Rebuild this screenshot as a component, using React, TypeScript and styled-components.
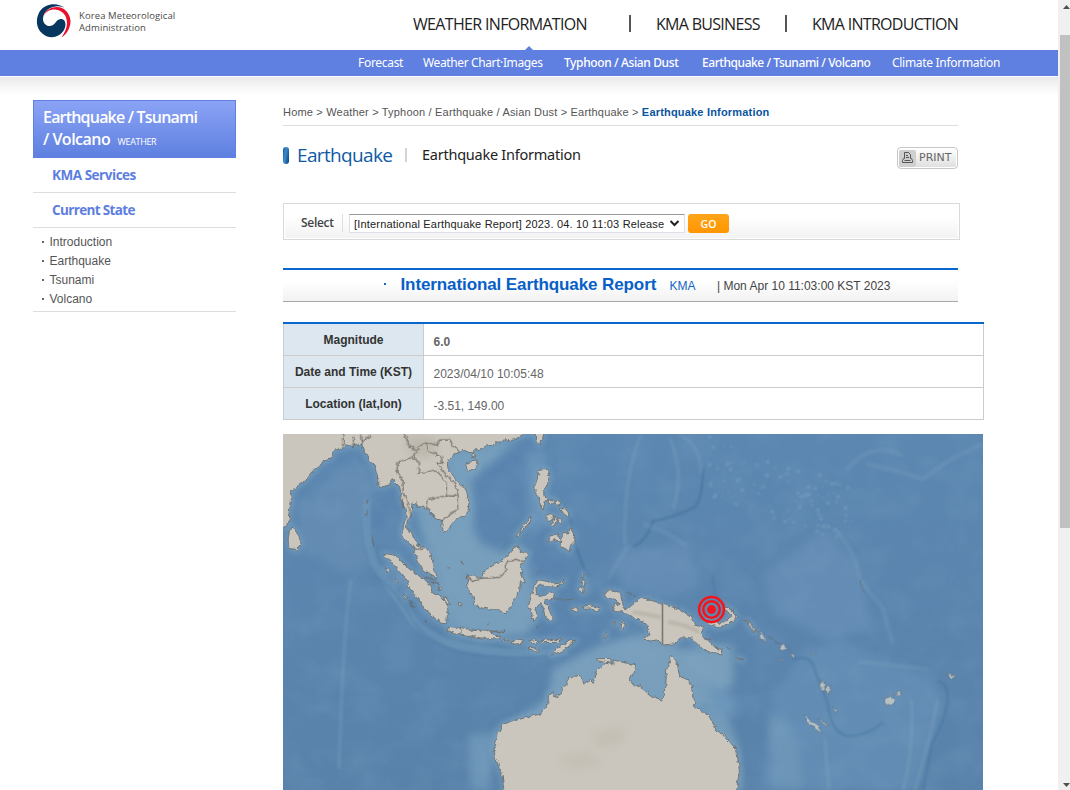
import React from "react";
import styled, { createGlobalStyle } from "styled-components";

const Global = createGlobalStyle`
  * { box-sizing: border-box; }
  body { margin: 0; background: #fff; overflow: hidden; font-family: "Liberation Sans", Arial, sans-serif; color: #444; }
`;
const humanist = `"Open Sans", "Noto Sans", sans-serif`;
const serifI = `"Noto Sans", "Open Sans", sans-serif`;

const Window = styled.div`display: flex; width: 1070px; height: 790px; overflow: hidden;`;
const Page = styled.div`width: 1058px; height: 790px; overflow: hidden;`;
const Header = styled.header`display: flex; height: 50px; padding-left: 36px;`;
const Brand = styled.div`
  display: flex; width: 377px; padding-top: 4px; gap: 7px;
  font: 500 9.5px/12px ${humanist}; color: #4a4a4a;
  svg { flex: none; }
  p { margin: 6px 0 0; letter-spacing: 0.1px; white-space: nowrap; }
`;
const Menu = styled.nav`display: flex; height: 50px; white-space: nowrap;`;
const MenuItem = styled.a<{ $w: number; $gap: number; $ls: number }>`
  width: ${p => p.$w}px; margin-right: ${p => p.$gap}px; letter-spacing: ${p => p.$ls}px;
  font: 400 16px/48px ${humanist}; color: #222;
`;
const MenuBar = styled.i<{ $gap: number }>`width: 2px; height: 17px; margin: 15px ${p => p.$gap}px 0 0; background: #555;`;
const SubNav = styled.nav`
  position: relative; display: flex; height: 26px; padding-left: 358px; background: #5f80e0; white-space: nowrap;
`;
const Pointer = styled.i`
  position: absolute; left: 525px; top: -4px; border: 4px solid transparent; border-top: 0; border-bottom-color: #5f80e0;
`;
const SubItem = styled.a<{ $w: number; $gap: number; $ls: number; $bold?: boolean }>`
  width: ${p => p.$w}px; margin-right: ${p => p.$gap}px; letter-spacing: ${p => p.$ls}px;
  font: ${p => (p.$bold ? 500 : 400)} 12px/${p => (p.$bold ? 26 : 25)}px ${serifI}; color: #fff;
`;
const Shade = styled.div`height: 18px; margin-top: 1px; background: linear-gradient(#e9e9e9, #f5f5f5 50%, #fff);`;
const Body = styled.div`display: flex; padding: 5px 0 0 33px; gap: 47px;`;
const Side = styled.aside`width: 203px; flex: none;`;
const SideTitle = styled.h2`
  height: 58px; margin: 0; padding: 5px 0 0 9px; border: 1px solid #5f80e0;
  background: linear-gradient(#8aa3f5, #5f80e0); color: #fff; white-space: nowrap;
  font: 600 16px/22px ${humanist}; letter-spacing: -0.8px;
  span { letter-spacing: -0.5px; }
  small { margin-left: 4px; font-size: 9px; font-weight: 400; letter-spacing: -0.35px; }
`;
const SideHead = styled.h3<{ $ls: number }>`
  height: 35px; margin: 0; padding-left: 19px; border-bottom: 1px solid #ddd; color: #5c7ee0;
  font: 700 13.5px/34px ${humanist}; letter-spacing: ${p => p.$ls}px;
`;
const SideList = styled.ul`
  height: 84px; margin: 0; padding: 4px 0 0 9px; border-bottom: 1px solid #ddd; list-style: none;
  li { display: flex; align-items: center; gap: 5.5px; height: 19px; font-size: 12px; color: #555; }
  li::before { content: ""; width: 2px; height: 2px; background: #666; }
`;
const Main = styled.main`width: 701px;`;
const Crumbs = styled.div`
  width: 675px; height: 26px; border-bottom: 1px solid #ddd; font-size: 11px; line-height: 24px;
  letter-spacing: 0.19px; color: #555; white-space: nowrap;
  b { color: #0a55a0; letter-spacing: 0.19px; }
`;
const Heading = styled.div`display: flex; align-items: flex-start; width: 675px; height: 77px; padding-top: 18px;`;
const Pill = styled.i`
  width: 6px; height: 17px; margin: 3px 8px 0 0; border-radius: 3px;
  background: linear-gradient(100deg, #0a58a8, #3f8bca 40%, #02417f);
`;
const H1 = styled.h1`
  width: 108px; margin: 0; font: 400 19px/23px ${humanist}; color: #1059a5; letter-spacing: -0.65px; white-space: nowrap;
`;
const Rule = styled.i`width: 2px; height: 14px; margin: 4px 15px 0 0; background: #d4d4d4;`;
const H2 = styled.h2`
  width: 475px; margin: 0; font: 400 14.5px/20px ${serifI}; color: #222; letter-spacing: -0.25px; white-space: nowrap;
`;
const Print = styled.button`
  display: flex; align-items: center; flex: none; width: 61px; height: 22px; margin: 3px 0 0 0; padding: 1px;
  border: 1px solid #c8c8c8; border-radius: 4px; background: linear-gradient(#fff, #dedede);
  box-shadow: inset 0 0 0 1px #fff; color: #666; font: 11px/20px "DejaVu Sans", sans-serif; letter-spacing: 0;
  span { display: flex; align-items: center; justify-content: center; width: 17px; height: 17px; margin-right: 3px; border-radius: 2px; background: #cfcfcf; }
`;
const Picker = styled.div`
  display: flex; align-items: flex-start; width: 677px; height: 37px; padding: 10px 0 0 17px; border: 1px solid #d9d9d9;
  background: linear-gradient(#fff 35%, #f2f2f2); box-shadow: inset 0 0 0 1px #fff;
`;
const PickLabel = styled.label`
  width: 42px; height: 18px; margin-right: 6px; border-right: 1px solid #ddd;
  font: 600 12px/17px ${humanist}; letter-spacing: -0.3px; color: #444;
`;
const Select = styled.div`
  display: flex; justify-content: space-between; align-items: center; width: 336px; height: 19px; padding: 1px 4px 0;
  border: 1px solid #dfdfea; border-top-color: #999; background: #fff; color: #222; font-size: 11px; letter-spacing: 0.18px; white-space: nowrap;
  svg { flex: none; margin-bottom: 2px; }
`;
const Go = styled.button`
  width: 41px; height: 19px; margin-left: 3px; padding: 0; border: 0; border-radius: 3px; background: linear-gradient(#ffa51a, #ff9500);
  color: #fff; font: 600 10.5px/20px ${humanist};
`;
const Report = styled.div`
  display: flex; align-items: baseline; width: 675px; height: 34px; margin-top: 28px; padding: 5px 0 0 101px; white-space: nowrap;
  border-top: 2px solid #0a68cc; border-bottom: 1px solid #aaa; background: linear-gradient(#fff 35%, #f2f2f2);
  font-size: 12px; color: #444;
  &::before { content: ""; width: 2px; height: 2px; margin-right: 14.5px; background: #1065c5; transform: translateY(-5px); }
  strong { width: 269px; font-size: 17px; line-height: 19px; color: #0660c8; letter-spacing: -0.1px; }
  a { width: 47.5px; color: #1065c5; }
`;
const Table = styled.dl`
  display: grid; grid-template-columns: 141px 560px; grid-auto-rows: 32px; width: 701px; margin: 20px 0 0;
  border-top: 2px solid #0a68cc;
`;
const Term = styled.dt`
  border: 1px solid #ccc; border-top: 0; background: #dce7ef; color: #333; text-align: center;
  font-weight: 700; font-size: 12px; line-height: 33px; letter-spacing: 0; white-space: nowrap;
`;
const Value = styled.dd<{ $bold?: boolean }>`
  margin: 0; padding: 2px 0 0 9.5px; border: 1px solid #ccc; border-top: 0; border-left: 0; color: #666;
  font-size: 12px; line-height: 33px; font-weight: ${p => (p.$bold ? 700 : 400)};
`;
const MapFrame = styled.div`width: 700px; height: 356px; margin-top: 14px; overflow: hidden; svg { display: block; }`;
const Track = styled.div`
  display: flex; flex-direction: column; width: 12px; height: 790px; padding: 5px 0 3px 2px; background: #f0f0f0;
  svg { display: block; flex: none; margin-left: 3px; }
`;
const Thumb = styled.i`width: 10px; height: 493px; margin: 26px 0 255px; background: #c1c1c1;`;

const Emblem = () => (
  <svg width="36" height="35" viewBox="0 0 36 35">
    <path d="M30 5 C22 -2 10 -1 4 7 C-1 15 0 25 7 30 C14 36 24 33 28 26 C31 20 29 15 25 15 C21 15 20 19 17 21 C12 24 7 20 7 15 C7 7 14 3 20 2.500 C24 2 28 3 30 5Z" fill="#07365f" />
    <path d="M7 13 C9 6 15 3 21 3 C28 3 34 9 34.500 17 C34.500 24 31 30 25.500 33.500 C29 28 31 24 31 19 C31 11 26 6 19 5.500 C13 5.500 9 8 7 13Z" fill="#e8102e" />
  </svg>
);

const ASIA = "M-20 -20H740V10L718 14 702 25 685 28 665 30 655 40 640 35 638 45 610 48 590 58 576 60 574 72 578 84 567 82 568 65 550 64 540 58 525 68 512 72 500 85 493 100 495 115 510 140 535 165 550 185 558 215 555 245 540 262 515 268 505 280 500 295 483 308 476 285 480 272 462 268 452 262 448 248 435 240 420 228 405 232 400 218 390 220 388 240 378 262 370 285 372 298 385 305 392 325 405 345 425 352 440 370 452 400 455 425 462 445 440 432 420 420 408 395 395 370 392 350 378 340 362 322 357 310 362 285 370 265 366 235 355 205 350 170 335 155 330 145 318 165 300 170 285 168 283 135 270 100 258 88 245 65 235 40 225 48 217 36 210 50 190 44 187 52 175 55 150 62 145 85 120 95 90 125 65 155 40 170 22 185 25 215 18 245 20 265 8 290 0 292 -20 300Z";
const WEST_ISLES = "M30 290 45 315 55 340 40 360 22 355 15 330 20 300Z M560 92 582 90 585 103 572 120 555 122 548 108Z M302 370 320 373 345 378 355 395 385 422 400 432 425 450 440 465 450 490 470 500 490 520 495 545 490 580 475 580 450 560 425 540 405 505 380 475 370 450 345 420 325 395 305 380Z M497 588 530 595 545 602 580 600 610 605 625 618 600 628 550 618 515 612 493 602Z M553 440 565 438 590 445 610 418 650 395 670 380 700 345 715 365 738 373 722 392 712 410 718 440 730 458 712 455 710 480 690 510 685 530 670 548 640 540 600 535 575 525 570 500 555 480Z M482 503 495 508 500 522 488 515Z M526 520 538 524 533 533 526 528Z M336 445 346 455 342 460Z M362 487 374 500 370 508Z M307 414 320 424 312 428Z M465 468 473 475 468 482Z M696 320 716 298 707 318Z";
const EAST_ISLES = "M45 8H72L68 28 58 45 48 30Z M55 122 80 118 88 140 82 165 70 185 75 205 90 213 75 215 70 240 62 230 58 205 45 190 45 165 52 150Z M120 330 130 310 145 312 150 292 160 310 162 338 150 350 148 365 135 355 120 350 122 335 100 328 85 335 90 318 115 312Z M90 208 105 212 100 222 88 220Z M110 208 122 218 117 230 108 220Z M120 235 142 238 148 260 132 252Z M80 255 100 255 98 272 82 275Z M105 260 112 262 102 290 95 285Z M115 265 128 268 120 285 111 278Z M0 300 38 258 30 275 5 305Z M185 435 192 430 188 448Z M190 450 200 460 190 466 184 455Z M182 465 190 475 186 492 178 478Z M198 475 204 480 198 486Z";
const SULAWESI = "M222 50 235 30 265 35 300 42 315 28 308 45 275 48 240 45 228 55 230 70 235 80 260 75 268 65 285 70 280 85 250 90 265 110 272 135 280 145 270 152 255 140 250 115 240 100 228 115 230 140 218 155 215 125 205 110 212 85Z M340 110 352 112 350 124 337 120Z M370 112 395 108 422 115 415 122 390 117 372 118Z M0 172 45 182 75 180 95 185 98 195 122 198 118 207 80 206 40 200 0 192Z M130 208 145 212 160 212 180 211 194 215 180 221 163 222 147 216 130 213Z M205 213 225 209 240 216 222 220Z M245 212 280 208 310 210 292 217 250 218Z M275 256 290 235 325 213 350 211 315 237 290 250Z M205 232 226 234 238 244 220 242Z M480 160 492 152 495 170 487 180Z M430 202 440 185 436 208Z M410 266 432 266 452 265 454 280 430 276 412 272Z M790 103 820 125 832 140 825 150 805 165 770 172 744 160 742 150 760 158 790 156 815 142Z M860 150 874 165 892 188 880 185 865 168Z M830 262 852 270 835 268Z M457 158 466 156 463 164Z";
const GUINEA = "M432 70 460 60 482 68 485 90 495 120 520 100 548 82 600 100 650 115 690 140 705 162 732 172 720 190 750 220 765 235 790 238 785 252 745 245 715 225 695 205 670 200 655 212 640 222 607 225 590 210 560 215 550 205 570 195 560 165 530 145 500 132 480 125 465 125 455 108 478 100 462 90 440 80Z";
const AUSTRALIA = "M134 700 132 660 127 620 113 580 105 560 100 545 108 520 112 480 120 486 125 466 150 455 190 445 245 430 265 400 265 375 278 365 282 382 290 385 297 372 308 365 305 350 322 346 320 330 345 318 362 322 373 342 390 330 400 340 410 300 440 280 458 284 460 270 480 275 530 285 520 310 508 335 545 355 575 378 605 390 616 370 620 300 635 255 650 275 660 320 685 330 700 370 705 410 745 435 770 480 785 488 800 505 830 540 838 600 825 700Z";
const PACIFIC = "M0 580 15 600 10 606 0 590Z M32 600 50 635 40 636 28 620Z M55 618 90 645 80 638Z M88 650 105 640 113 660 95 665Z M118 665 133 678 125 683Z M185 665 198 675 190 677Z M211 750 222 755 226 785 213 775Z M228 765 241 770 237 795 230 785Z M251 828 262 842 257 850Z M162 852 180 870 205 888 218 910 195 898 170 875Z M205 866 238 885 222 884Z M405 806 420 798 434 810 430 824 414 826 403 818Z M430 795 455 782 448 798Z M590 732 620 738 605 746Z M93 685 99 690 92 694Z M330 453 343 487 332 465Z";

type LandProps = { fill: string; stroke: string; strokeWidth: number; filter?: string; opacity?: number };
const Land = (p: LandProps) => (
  <g {...p} strokeLinejoin="round">
    <g transform="translate(0 -4) scale(.33333)"><path d={ASIA} /><path d={WEST_ISLES} /></g>
    <g transform="translate(237 -4) scale(.33333)"><path d={EAST_ISLES} /></g>
    <g transform="translate(177 136) scale(.33333)"><path d={SULAWESI} /><path d={GUINEA} /><path d={AUSTRALIA} /></g>
  </g>
);

const specks = Array.from({ length: 110 }, (_, i) => {
  const a = Math.abs(Math.sin(i * 91.7) * 437.5) % 1;
  const b = Math.abs(Math.sin(i * 47.3) * 913.1) % 1;
  return { x: 425 + a * 145, y: 2 + b * 60 + a * 50, r: 0.3 + ((i * 7) % 5) * 0.25 };
});

const EpicenterMap = () => (
  <svg width="700" height="356" viewBox="0 0 700 356">
    <defs>
      <filter id="soft" x="-10%" y="-10%" width="120%" height="120%" colorInterpolationFilters="sRGB"><feGaussianBlur stdDeviation="4" /></filter>
      <filter id="halo" x="-10%" y="-10%" width="120%" height="120%" colorInterpolationFilters="sRGB"><feGaussianBlur stdDeviation="2.5" /></filter>
      <filter id="fine" x="-10%" y="-10%" width="120%" height="120%" colorInterpolationFilters="sRGB"><feGaussianBlur stdDeviation="1" /></filter>
      <filter id="coast" x="0" y="0" width="700" height="356" filterUnits="userSpaceOnUse" colorInterpolationFilters="sRGB">
        <feTurbulence type="fractalNoise" baseFrequency=".2" numOctaves="2" seed="4" />
        <feDisplacementMap in="SourceGraphic" scale="5" xChannelSelector="R" yChannelSelector="G" />
      </filter>
      <filter id="seabed" x="0" y="0" width="100%" height="100%" colorInterpolationFilters="sRGB">
        <feTurbulence type="fractalNoise" baseFrequency=".03 .035" numOctaves="5" seed="9" />
        <feColorMatrix values="0 0 0 0 .52  0 0 0 0 .67  0 0 0 0 .8  1.8 0 0 0 -.72" />
      </filter>
      <linearGradient id="sea" x2="0" y2="1"><stop stopColor="#5c87b0" /><stop offset="1" stopColor="#5982aa" /></linearGradient>
    </defs>
    <rect width="700" height="356" fill="url(#sea)" />
    <g filter="url(#soft)">
      <path d="M15 70 L50 42 75 25 85 33 92 55 85 75 80 110 90 130 60 140 15 110Z" fill="#648cb3" />
      <path d="M130 65 H175 L190 95 200 112 225 120 240 108 255 180 245 200 200 205 165 190 150 140 Z" fill="#789fbc" />
      <path d="M160 20 L235 5 205 32 188 45 192 90 180 95Z" fill="#779fbd" />
      <path d="M320 210 L360 200 400 215 450 210 450 250 410 280 370 285 350 280 300 280 260 305 240 320 205 315 225 290 265 265 270 235 Z" fill="#799fbc" />
      <path d="M185 300 L215 300 205 356 H188Z" fill="#6d96b7" />
      <path d="M410 230 L425 260 445 285 455 310 460 356 H450 L425 290Z" fill="#749bb8" />
      <path d="M425 250 L450 262 452 280 432 278Z M242 20 L262 15 265 90 248 120Z" fill="#6993b8" />
      <path d="M480 140 L540 95 575 130 590 195 545 205 490 180Z M330 120 L400 108 420 150 390 165 340 155Z" fill="#648cb4" />
      <path d="M520 215 L560 208 650 245 660 280 630 356 H480 L490 260Z" fill="#628cb3" />
      <path d="M485 280 L505 285 515 310 520 356H490Z" fill="#6c95b7" />
      <path d="M200 35 L240 15 245 55 220 95 200 105 190 90Z M90 75 L107 65 104 105 95 112Z M246 127 L277 115 280 142 250 147Z M255 95 L268 90 264 110 245 112Z M255 195 L310 185 318 205 285 212 258 208Z" fill="#5983ae" />
    </g>
    <rect width="700" height="356" filter="url(#seabed)" opacity=".2" />
    <g fill="none" filter="url(#fine)">
      <path d="M275 62 Q289 78 291 105 Q296 125 305 142 M350 112 Q362 110 370 87 Q390 84 412 73 Q420 62 420 34" stroke="#38698f" strokeWidth="1.7" opacity=".6" />
      <path d="M430 142 Q430 160 436 168" stroke="#3b688f" strokeWidth="1" opacity=".5" />
      <path d="M395 0 Q418 10 418 40" stroke="#7d9fc4" strokeWidth="4" opacity=".3" />
      <path d="M510 226 Q529 218 533 240 L545 270 Q548 300 565 302 Q585 302 600 288 M655 247 Q667 250 664 270 Q662 286 649 310 L640 356" stroke="#376d97" strokeWidth="1.7" opacity=".5" />
      <path d="M655 265 Q648 300 632 356 M628 265 Q632 310 620 356 M542 305 L546 356 M358 0 Q340 45 342 110 M387 5 Q402 40 390 75 M68 145 Q60 200 56 335" stroke="#91adc8" strokeWidth="4" opacity=".2" />
      <path d="M583 30 Q610 35 640 45 L670 24 700 10 M563 36 Q590 5 620 22 M550 94 Q575 120 576 145 L600 175 610 210 M575 228 L645 235 M360 90 Q380 95 405 113 M325 145 L345 112" stroke="#8aacc8" strokeWidth="5" opacity=".18" />
      <path d="M85 65 Q80 95 91 128 Q107 155 133 190 Q155 210 195 215 Q240 222 285 218" stroke="#769fbe" strokeWidth="8" opacity=".4" />
      <path d="M91 142 Q112 152 132 190 Q145 208 178 219 Q220 226 265 222" stroke="#49789f" strokeWidth="2" opacity=".4" />
    </g>
    <g fill="#90b4cf" opacity=".35" filter="url(#fine)">{specks.map((s, i) => <circle key={i} cx={s.x} cy={s.y} r={s.r + 0.6} />)}</g>
    <Land fill="#789fbe" stroke="#789fbe" strokeWidth={18} filter="url(#halo)" opacity={0.65} />
    <g filter="url(#coast)">
      <Land fill="#cbc6bd" stroke="#6b7274" strokeWidth={2.8} />
      <g transform="translate(467 -4) scale(.33333)" fill="#b5c1c4" stroke="#5b6d7b" strokeWidth="2"><path d={PACIFIC} /></g>
      <g transform="translate(0 -4) scale(.33333)" fill="none" stroke="#6b6663" strokeWidth="3.3">
        <path d="M240 35 265 12M365 12 380 50 400 60 415 45 430 38 462 45 470 30 500 30 512 50 530 62M425 42 440 65 475 80 478 100 460 98 490 135 515 160 525 195 527 235 500 255 478 272M400 65 390 85 345 95 342 122 360 155 360 190 380 230 380 260M390 85 410 100 405 130 460 120 490 160 490 200M525 198 490 198 450 205 432 210 430 230 450 262M390 342 400 360 425 352M553 440 570 455 590 445 650 442 668 425 672 393 720 390" />
        <path d="M180 12 182 50M212 20 210 50M235 12 238 42M252 220 258 208M253 240 250 258M356 205 360 235M267 318 272 350M420 440 460 450M440 455 470 460" />
        <path d="M495 412 500 415M536 397 542 403M548 432 556 436M375 512 395 530M425 570 430 575M625 604 665 604M615 582 619 584" />
      </g>
      <g transform="translate(177 136) scale(.33333)" fill="none" stroke="#687276" strokeWidth="3">
        <path d="M285 86 310 90 340 88M232 165 235 175M500 67 525 78M735 205 755 213M800 230 808 240M790 103 825 128M850 150 860 153M240 0 232 10" />
      </g>
    </g>
    <path d="M379.500 170V211" stroke="#777773" strokeWidth="1.6" />
    <path d="M122 2 L150 2 155 12 145 25 128 22Z" fill="#999787" opacity=".28" filter="url(#soft)" />
    <path d="M310 300 L342 292 340 308 315 315Z M275 325 L305 318 320 330 290 335Z" fill="#a9a697" opacity=".2" filter="url(#soft)" />
    <path d="M350 178 L378 183 M385 188 Q402 190 416 198" fill="none" stroke="#8e8778" strokeWidth="4" opacity=".25" filter="url(#fine)" />
    <g fill="none" stroke="#f5141b" strokeWidth="2.5">
      <circle cx="428.500" cy="175.500" r="12.400" /><circle cx="428.500" cy="175.500" r="8.200" />
      <circle cx="428.500" cy="175.500" r="4.400" fill="#f5141b" stroke="none" />
    </g>
  </svg>
);

const rows = [
  { term: "Magnitude", value: "6.0", bold: true },
  { term: "Date and Time (KST)", value: "2023/04/10 10:05:48" },
  { term: "Location (lat,lon)", value: "-3.51, 149.00" },
];

export default function App() {
  return (
    <>
      <Global />
      <Window>
        <Page>
          <Header>
            <Brand><Emblem /><p>Korea Meteorological<br />Administration</p></Brand>
            <Menu>
              <MenuItem $w={174} $gap={42} $ls={-0.67}>WEATHER INFORMATION</MenuItem><MenuBar $gap={25} />
              <MenuItem $w={105} $gap={24} $ls={-0.7}>KMA BUSINESS</MenuItem><MenuBar $gap={25} />
              <MenuItem $w={147} $gap={0} $ls={-0.7}>KMA INTRODUCTION</MenuItem>
            </Menu>
          </Header>
          <SubNav>
            <Pointer />
            <SubItem $w={46} $gap={19} $ls={-0.3}>Forecast</SubItem>
            <SubItem $w={120} $gap={21} $ls={-0.38}>Weather Chart·Images</SubItem>
            <SubItem $w={115} $gap={23} $ls={-0.38} $bold>Typhoon / Asian Dust</SubItem>
            <SubItem $w={169} $gap={21} $ls={-0.44} $bold>Earthquake / Tsunami / Volcano</SubItem>
            <SubItem $w={109} $gap={0} $ls={-0.3}>Climate Information</SubItem>
          </SubNav>
          <Shade />
          <Body>
            <Side>
              <SideTitle>Earthquake / Tsunami<br /><span>/ Volcano</span> <small>WEATHER</small></SideTitle>
              <SideHead $ls={-0.47}>KMA Services</SideHead>
              <SideHead $ls={-0.65}>Current State</SideHead>
              <SideList><li>Introduction</li><li>Earthquake</li><li>Tsunami</li><li>Volcano</li></SideList>
            </Side>
            <Main>
              <Crumbs>Home &gt; Weather &gt; Typhoon / Earthquake / Asian Dust &gt; Earthquake &gt; <b>Earthquake Information</b></Crumbs>
              <Heading>
                <Pill /><H1>Earthquake</H1><Rule /><H2>Earthquake Information</H2>
                <Print>
                  <span><svg width="11" height="12" viewBox="0 0 11 12" fill="none" stroke="#555"><path d="M2.500 6.500V.500H6.500L8.500 2.500V6.500M4 3.500H6M4 5.500H7M2.500 6.500H1.500L.500 8.500V10.500H10.500V8.500L9.500 6.500H8.500M2.500 8.500H8.500" /></svg></span>PRINT
                </Print>
              </Heading>
              <Picker>
                <PickLabel>Select</PickLabel>
                <Select>[International Earthquake Report] 2023. 04. 10 11:03 Release
                  <svg width="11" height="7" viewBox="0 0 11 7" fill="none" stroke="#222" strokeWidth="2"><path d="M1.500 1L5.500 5L9.500 1" /></svg>
                </Select>
                <Go>GO</Go>
              </Picker>
              <Report><strong>International Earthquake Report</strong><a>KMA</a><span>| Mon Apr 10 11:03:00 KST 2023</span></Report>
              <Table>
                {rows.map(r => (
                  <React.Fragment key={r.term}><Term>{r.term}</Term><Value $bold={r.bold}>{r.value}</Value></React.Fragment>
                ))}
              </Table>
              <MapFrame><EpicenterMap /></MapFrame>
            </Main>
          </Body>
        </Page>
        <Track>
          <svg width="7" height="4"><path d="M0 4 3.500 0 7 4Z" fill="#505050" /></svg>
          <Thumb />
          <svg width="7" height="4"><path d="M0 0H7L3.500 4Z" fill="#505050" /></svg>
        </Track>
      </Window>
    </>
  );
}
